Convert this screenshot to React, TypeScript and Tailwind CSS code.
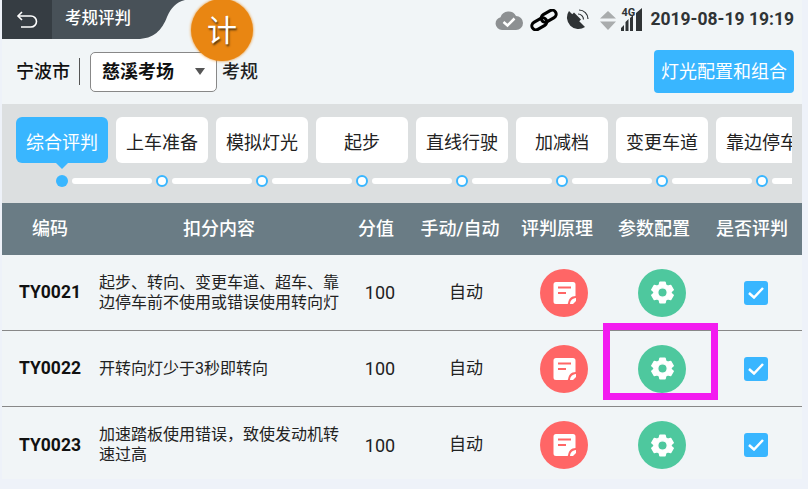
const cjk = "font-['Roboto','Noto_Sans_CJK_SC',sans-serif]"

const tabs = ["上车准备", "模拟灯光", "起步", "直线行驶", "加减档", "变更车道", "靠边停车"]

const rows = [
    { code: "TY0021", text: "起步、转向、变更车道、超车、靠边停车前不使用或错误使用转向灯" },
    { code: "TY0022", text: "开转向灯少于3秒即转向" },
    { code: "TY0023", text: "加速踏板使用错误，致使发动机转速过高" },
]

function NoteIcon() {
    return (
        <svg width="23" height="24" viewBox="0 0 23 24">
            <path d="M3 1h17a2.500 2.500 0 0 1 2.500 2.500V15l-8 8H3a2.500 2.500 0 0 1-2.500-2.500v-17A2.500 2.500 0 0 1 3 1z" fill="#fff" />
            <path d="M5 6.500h13M5 12h8" stroke="#ff6666" strokeWidth="2" />
            <path d="M23 15c-5 0-8 3-8 9h8z" fill="#ff6666" />
            <path d="M17 23c0-3 2-5.500 6-6v3l-3 3z" fill="#fff" />
        </svg>
    )
}

function GearIcon() {
    return (
        <svg width="25" height="25" viewBox="0 0 24 24">
            <path
                fillRule="evenodd"
                fill="#fff"
                stroke="#fff"
                strokeWidth="1.200"
                strokeLinejoin="round"
                d="M9.500 2h5l.7 2.800 1.900 1.100 2.800-.8 2.500 4.300-2.100 2v1.200l2.100 2-2.500 4.300-2.800-.8-1.900 1.100-.7 2.800h-5l-.7-2.800-1.900-1.100-2.800.8-2.500-4.300 2.100-2v-1.200l-2.100-2 2.500-4.300 2.800.8 1.900-1.100zM12 7.500a4.500 4.500 0 1 0 0 9 4.500 4.500 0 0 0 0-9z"
            />
        </svg>
    )
}

function StatusIcons() {
    return (
        <div className="flex items-center">
            <svg width="28" height="21" viewBox="0 0 28 21">
                <path d="M7 21a6.500 6.500 0 0 1-1.500-12.800A8.500 8.500 0 0 1 21 7a7 7 0 0 1 0 14z" fill="#8d9092" />
                <path d="M8.500 13l4 3.500 7-7" stroke="#fff" strokeWidth="2.500" fill="none" />
            </svg>
            <svg width="30" height="22" viewBox="0 0 30 22" className="ml-[6px]">
                <g fill="none" stroke="#000" strokeWidth="3" transform="rotate(-30 15 11)">
                    <rect x="1" y="8" width="16" height="8" rx="4" />
                    <rect x="13" y="6" width="16" height="8" rx="4" />
                </g>
            </svg>
            <svg width="23" height="22" viewBox="0 0 23 22" className="ml-[7px]">
                <path d="M3 2l16 16A11.500 11.500 0 0 1 3 2z" fill="#2f3335" />
                <path d="M8 3.500l7 7-3 3-7-7z" fill="#2f3335" />
                <g fill="none" stroke="#2f3335" strokeWidth="1.200">
                    <path d="M12 5a5.500 5.500 0 0 1 5.500 5.500" />
                    <path d="M13 1a9 9 0 0 1 9 9" />
                </g>
            </svg>
            <svg width="16" height="20" viewBox="0 0 16 20" className="ml-[11px]">
                <path d="M8 1l8 7.500H0zM8 20l8-8.500H0z" fill="#a9acad" />
            </svg>
            <div className="relative w-[21px] h-[23px] ml-[5px]">
                <svg width="21" height="23" viewBox="0 0 21 23" className="absolute left-0 top-0">
                    <path d="M0 23v-3l3-3v6zM4.500 23v-9l3-3v12zM9 23V10l3-3v16zM15 23V5l6-5v23z" fill="#2f3335" />
                </svg>
                <span className="absolute left-0 top-[-2px] text-[11px] leading-[13px] font-bold text-[#2f3335] font-['Roboto',sans-serif]">4G</span>
            </div>
        </div>
    )
}

export default function App() {
    return (
        <div className={`w-[808px] h-[489px] bg-[#eef2f9] pl-[2px] overflow-hidden relative ${cjk}`}>
            <div className="w-[800px] h-[479px] bg-[#f1f5f7] flex flex-col">
                {/* top bar */}
                <div className="h-[39px] flex justify-between shrink-0">
                    <div className="flex">
                        <div className="w-[50px] bg-[#363d43] flex items-center justify-center">
                            <svg width="22" height="20" viewBox="0 0 22 20" fill="none" stroke="#fff" strokeWidth="1.600">
                                <path d="M6 2L2 6l4 4" />
                                <path d="M2 6h13a5 5 0 0 1 0 11H5" />
                            </svg>
                        </div>
                        <div className="w-[85px] bg-[#485158] text-white text-[16.500px] font-medium flex items-center pl-[13px] whitespace-nowrap">考规评判</div>
                        <svg width="48" height="39" viewBox="0 0 48 39" className="block">
                            <path d="M0 0h48c-9 2-14 8-18 17C25 30 17 39 0 39z" fill="#485158" />
                        </svg>
                    </div>
                    <div className="flex items-center pr-[8px]">
                        <StatusIcons />
                        <span className="ml-[8px] text-[17.500px] font-bold text-[#2f3335] whitespace-nowrap">2019-08-19 19:19</span>
                    </div>
                </div>

                {/* filter row */}
                <div className="h-[65px] flex items-center justify-between pr-[8px] shrink-0">
                    <div className="flex items-center pl-[14px]">
                        <span className="text-[18px] font-medium text-[#111] leading-none">宁波市</span>
                        <div className="w-px h-[27px] bg-[#555] ml-[9px]" />
                        <div className="w-[127px] h-[40px] ml-[10px] bg-white border border-[#888] rounded-[5px] flex items-center justify-between pl-[11px] pr-[11px]">
                            <span className="text-[18px] font-bold text-[#111]">慈溪考场</span>
                            <div className="w-0 h-0 border-l-[5.500px] border-r-[5.500px] border-t-[7px] border-l-transparent border-r-transparent border-t-[#555]" />
                        </div>
                        <span className="text-[18px] font-medium text-[#222] ml-[5px]">考规</span>
                    </div>
                    <button className="w-[140px] h-[43px] bg-[#39b6ff] rounded-[4px] text-white text-[18px] flex items-center justify-center">灯光配置和组合</button>
                </div>

                {/* step tabs */}
                <div className="h-[99px] bg-[#dcdfe0] pr-[10px] pt-[13px] shrink-0">
                    <div className="overflow-hidden h-[73px]">
                        <div className="flex gap-[8px] pl-[14px] w-[900px]">
                            <div className="relative w-[92px] h-[46px] bg-[#39b6ff] rounded-[6px] text-white text-[18px] flex items-center justify-center shrink-0 pt-[5px]">
                                综合评判
                                <div className="absolute left-[40px] bottom-[-6px] w-0 h-0 border-l-[6px] border-r-[6px] border-t-[6px] border-l-transparent border-r-transparent border-t-[#39b6ff]" />
                            </div>
                            {tabs.map((t) => (
                                <div key={t} className="w-[92px] h-[46px] bg-white rounded-[6px] text-[#222] text-[18px] flex items-center justify-center shrink-0 whitespace-nowrap overflow-hidden pt-[5px]">{t}</div>
                            ))}
                        </div>
                        <div className="flex items-center pl-[54px] mt-[12px] w-[900px]">
                            {[0, 1, 2, 3, 4, 5, 6, 7].map((i) => (
                                <div key={i} className="flex items-center shrink-0 w-[100px]">
                                    <div className={i === 0 ? "w-[12px] h-[12px] rounded-full bg-[#39b6ff]" : "w-[12px] h-[12px] rounded-full bg-white border-2 border-[#39b6ff]"} />
                                    <div className="w-[80px] h-[6px] bg-white rounded-full ml-[4px]" />
                                </div>
                            ))}
                        </div>
                    </div>
                </div>

                {/* table */}
                <div className="h-[52px] bg-[#6a7c85] text-white text-[18px] font-medium flex items-center shrink-0 pb-[1px] whitespace-nowrap">
                    <div className="w-[96px] text-center">编码</div>
                    <div className="w-[242px] text-center">扣分内容</div>
                    <div className="w-[72px] text-center">分值</div>
                    <div className="w-[96px] text-center">手动/自动</div>
                    <div className="w-[98px] text-center">评判原理</div>
                    <div className="w-[96px] text-center">参数配置</div>
                    <div className="w-[100px] text-center">是否评判</div>
                </div>
                {rows.map((r, i) => (
                    <div key={r.code} className={i < 2 ? "h-[76px] flex items-center border-b border-[#888] shrink-0" : "h-[76px] flex items-center shrink-0"}>
                        <div className="w-[96px] text-center text-[17.500px] font-bold text-[#111]">{r.code}</div>
                        <div className="w-[256px] text-[16px] leading-[20px] text-[#222] pl-[1px] pr-[13px]">{r.text}</div>
                        <div className="w-[52px] text-center text-[18px] text-[#222]">100</div>
                        <div className="w-[120px] text-center text-[17px] text-[#222]">自动</div>
                        <div className="w-[76px] flex justify-center">
                            <div className="w-[48px] h-[48px] rounded-full bg-[#ff6666] flex items-center justify-center"><NoteIcon /></div>
                        </div>
                        <div className="w-[120px] flex justify-center">
                            <div className="w-[48px] h-[48px] rounded-full bg-[#4ec89e] flex items-center justify-center"><GearIcon /></div>
                        </div>
                        <div className="w-[68px] flex justify-center">
                            <div className="w-[24px] h-[24px] rounded-[3px] bg-[#39b6ff] flex items-center justify-center">
                                <svg width="16" height="12" viewBox="0 0 16 12" fill="none" stroke="#fff" strokeWidth="2.500"><path d="M1 6l5 4.500L15 1" /></svg>
                            </div>
                        </div>
                    </div>
                ))}
            </div>

            {/* floating badge */}
            <div className="absolute left-[191px] top-[-1px] w-[62px] h-[62px] rounded-full bg-[#e98612] text-white text-[30px] flex items-center justify-center shadow-[0_0_3px_#e98612] [text-shadow:1px_2px_2px_#5a3a10]">计</div>
            {/* highlight box */}
            <div className="absolute left-[603px] top-[323px] w-[115px] h-[77px] border-[7px] border-[#f31cf0]" />
        </div>
    )
}
